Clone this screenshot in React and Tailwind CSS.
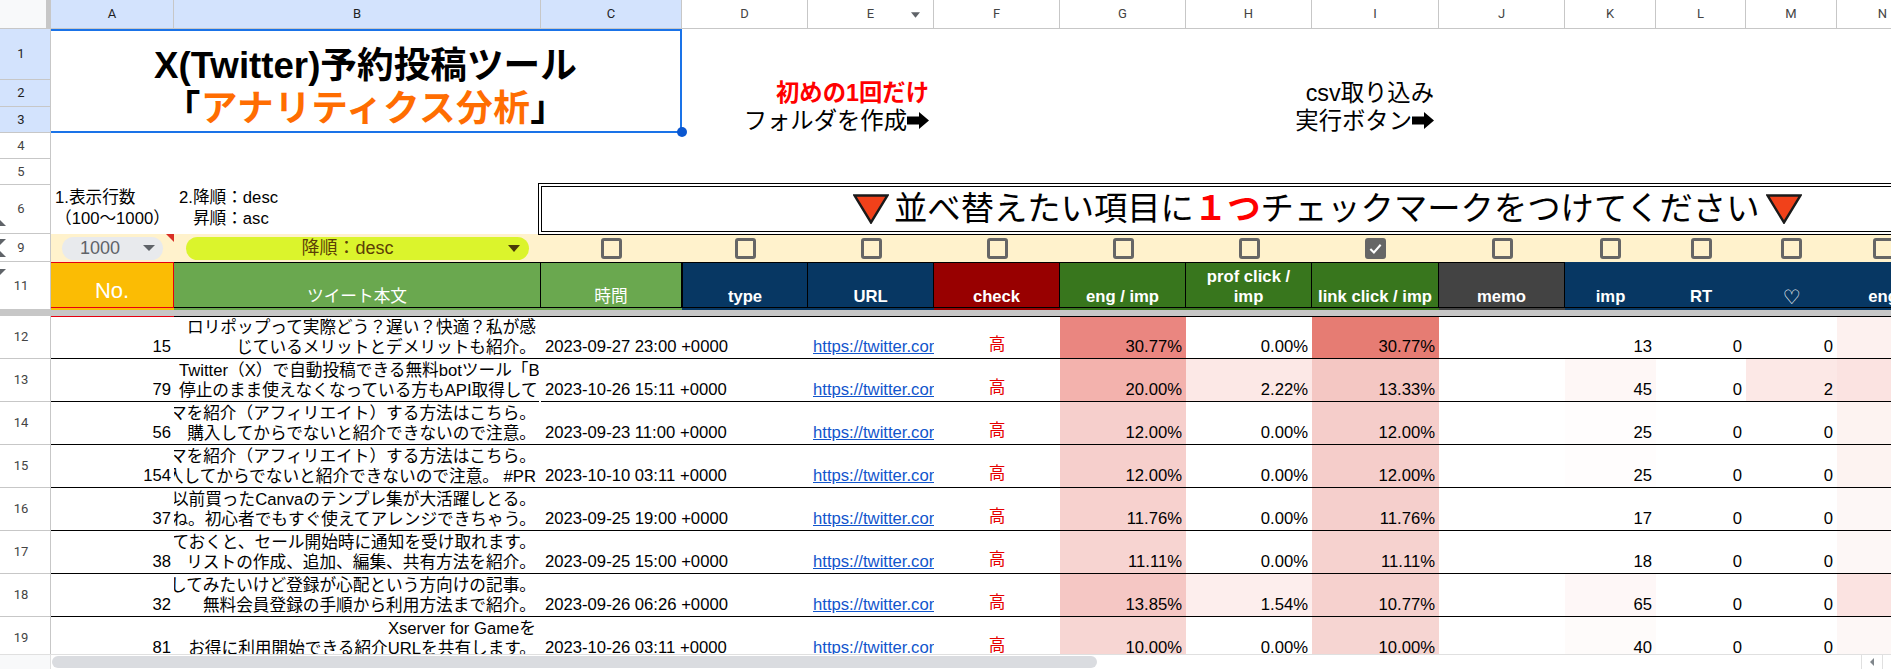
import { Fragment } from "react";

const cols = [
  ["A", true],
  ["B", true],
  ["C", true],
  ["D"],
  ["E"],
  ["F"],
  ["G"],
  ["H"],
  ["I"],
  ["J"],
  ["K"],
  ["L"],
  ["M"],
  ["N"],
];

const headers = [
  { label: "No.", bg: "bg-[#fbbc04]", cls: "font-normal text-[22px] leading-[26px] pb-[3px]", inner: "border-y border-r border-[#e6000f]" },
  { label: "ツイート本文", bg: "bg-[#6aa84f]", cls: "font-normal", inner: "border-y border-r border-black" },
  { label: "時間", bg: "bg-[#6aa84f]", cls: "font-normal", inner: "border-y border-r border-black" },
  { label: "type", bg: "bg-[#073763]", cls: "", inner: "border border-black" },
  { label: "URL", bg: "bg-[#073763]", cls: "", inner: "border-y border-r border-black" },
  { label: "check", bg: "bg-[#980000]", cls: "", inner: "border-y border-r border-black" },
  { label: "eng / imp", bg: "bg-[#38761d]", cls: "", inner: "border-y border-r border-black" },
  { label: "prof click / imp", bg: "bg-[#38761d]", cls: "", inner: "border-y border-r border-black" },
  { label: "link click / imp", bg: "bg-[#38761d]", cls: "", inner: "border-y border-r border-black" },
  { label: "memo", bg: "bg-[#434343]", cls: "", inner: "border-y border-r border-black" },
  { label: "imp", bg: "bg-[#073763]", cls: "", inner: "border-b border-black" },
  { label: "RT", bg: "bg-[#073763]", cls: "", inner: "border-b border-black" },
  { label: "♡", bg: "bg-[#073763]", cls: "font-normal", inner: "border-b border-black" },
  { label: "eng", bg: "bg-[#073763]", cls: "", inner: "border-b border-black" },
];

const rows = [
  { n: 12, no: 15, a: "ロリポップって実際どう？遅い？快適？私が感", b: "じているメリットとデメリットも紹介。", date: "2023-09-27 23:00 +0000", g: "30.77%", gc: "bg-[#ea8680]", h: "0.00%", hc: "bg-white", i: "30.77%", ic: "bg-[#e67c73]", k: 13, kc: "bg-white", m: 0, mc: "bg-white", nc: "bg-[#fdf1ef]" },
  { n: 13, no: 79, a: "Twitter（X）で自動投稿できる無料botツール「Botbird」", b: "停止のまま使えなくなっている方もAPI取得して", left: true, date: "2023-10-26 15:11 +0000", g: "20.00%", gc: "bg-[#f3b2ad]", h: "2.22%", hc: "bg-[#fce8e6]", i: "13.33%", ic: "bg-[#f4c7c3]", k: 45, kc: "bg-[#fef7f6]", m: 2, mc: "bg-[#fce8e6]", nc: "bg-[#fbe3e1]" },
  { n: 14, no: 56, a: "テーマを紹介（アフィリエイト）する方法はこちら。", b: "購入してからでないと紹介できないので注意。", date: "2023-09-23 11:00 +0000", g: "12.00%", gc: "bg-[#f6cfcc]", h: "0.00%", hc: "bg-white", i: "12.00%", ic: "bg-[#f5cdca]", k: 25, kc: "bg-[#fffdfd]", m: 0, mc: "bg-white", nc: "bg-[#fdf3f1]" },
  { n: 15, no: 154, a: "テーマを紹介（アフィリエイト）する方法はこちら。", b: "購入してからでないと紹介できないので注意。 #PR", date: "2023-10-10 03:11 +0000", g: "12.00%", gc: "bg-[#f6cfcc]", h: "0.00%", hc: "bg-white", i: "12.00%", ic: "bg-[#f5cdca]", k: 25, kc: "bg-[#fffdfd]", m: 0, mc: "bg-white", nc: "bg-[#fdf3f1]" },
  { n: 16, no: 37, a: "以前買ったCanvaのテンプレ集が大活躍しとる。", b: "ね。初心者でもすぐ使えてアレンジできちゃう。", date: "2023-09-25 19:00 +0000", g: "11.76%", gc: "bg-[#f7d1ce]", h: "0.00%", hc: "bg-white", i: "11.76%", ic: "bg-[#f5cfcc]", k: 17, kc: "bg-white", m: 0, mc: "bg-white", nc: "bg-[#fdf7f6]" },
  { n: 17, no: 38, a: "設定しておくと、セール開始時に通知を受け取れます。", b: "リストの作成、追加、編集、共有方法を紹介。", date: "2023-09-25 15:00 +0000", g: "11.11%", gc: "bg-[#f7d4d1]", h: "0.00%", hc: "bg-white", i: "11.11%", ic: "bg-[#f6d2cf]", k: 18, kc: "bg-white", m: 0, mc: "bg-white", nc: "bg-[#fdf7f6]" },
  { n: 18, no: 32, a: "してみたいけど登録が心配という方向けの記事。", b: "無料会員登録の手順から利用方法まで紹介。", date: "2023-09-26 06:26 +0000", g: "13.85%", gc: "bg-[#f5c7c4]", h: "1.54%", hc: "bg-[#fdeeed]", i: "10.77%", ic: "bg-[#f6d1ce]", k: 65, kc: "bg-[#fef7f7]", m: 0, mc: "bg-white", nc: "bg-[#fbe3e1]" },
  { n: 19, no: 81, a: "Xserver for Gameを", b: "お得に利用開始できる紹介URLを共有します。", date: "2023-10-26 03:11 +0000", g: "10.00%", gc: "bg-[#f7d6d3]", h: "0.00%", hc: "bg-white", i: "10.00%", ic: "bg-[#f6d5d2]", k: 40, kc: "bg-[#fefbfa]", m: 0, mc: "bg-white", nc: "bg-[#fdf7f6]" },
];

function RowLabel({ n, active }) {
  return (
    <div className={`flex items-center justify-center pr-[8px] border-b border-r border-[#c7c7c7] font-['Roboto',sans-serif] text-[13px] ${active ? "bg-[#d3e3fd] text-[#1f1f1f]" : "bg-white text-[#444]"}`}>
      {n}
    </div>
  );
}

function Arrow() {
  return (
    <svg viewBox="0 0 22 17" className="inline-block w-[22px] h-[17px]">
      <path d="M0 4.5h12V0l10 8.5L12 17v-4.500H0z" fill="#000" />
    </svg>
  );
}

function RedTriangle() {
  return (
    <svg viewBox="0 0 36 30" className="w-[36px] h-[30px] shrink-0">
      <path d="M1.5 1.5h33L18 28.500z" fill="#f1411a" stroke="#1a1a1a" strokeWidth="2.4" />
    </svg>
  );
}

function Check({ checked }) {
  return (
    <div className="flex items-center justify-center bg-[#fff2cc]">
      <div className={`flex items-center justify-center w-[21px] h-[21px] rounded-[3px] border-[3px] border-[#666] ${checked ? "bg-[#666]" : ""}`}>
        {checked && (
          <svg viewBox="0 0 16 16" className="w-[15px] h-[15px]">
            <path d="M2.5 8.500l3.800 3.800L13.500 4" fill="none" stroke="#fff" strokeWidth="2.200" />
          </svg>
        )}
      </div>
    </div>
  );
}

function Num({ children, cls = "bg-white" }) {
  return (
    <div className={`flex items-end justify-end pr-[4px] pb-[1px] border-b border-black whitespace-nowrap leading-[20px] ${cls}`}>
      {children}
    </div>
  );
}

function GroupMark({ up, cls }) {
  return (
    <svg viewBox="0 0 6 6" className={`absolute left-0 w-[6px] h-[6px] ${cls}`}>
      <path d={up ? "M-6 6L0 0l6 6z" : "M-6 0L0 6l6-6z"} fill="#5f6368" />
    </svg>
  );
}

export default function App() {
  return (
    <div className="relative w-[1891px] h-[669px] overflow-hidden bg-white text-black text-[16.67px] font-['Liberation_Sans','Noto_Sans_CJK_JP',sans-serif]">
      <div className="h-[654px] overflow-hidden">
        <div className="grid grid-cols-[51px_123px_367px_141px_126px_126px_126px_126px_126px_127px_126px_91px_90px_91px_92px] grid-rows-[29px_51px_27px_26px_26px_26px_49px_28px_48px_6px] auto-rows-[43px]">
          {/* column letters */}
          <div className="bg-[#f8f9fa] border-r-[5px] border-b border-[#c7c7c7]" />
          {cols.map(([c, on]) => (
            <div key={c} className={`relative flex items-center justify-center border-r border-b border-[#c7c7c7] font-['Roboto',sans-serif] text-[13px] ${on ? "bg-[#d3e3fd] text-[#1f1f1f]" : "bg-white text-[#444]"}`}>
              {c}
              {c === "E" && (
                <svg viewBox="0 0 10 6" className="absolute right-[13px] top-[12px] w-[9px] h-[6px]">
                  <path d="M0 0h10L5 6z" fill="#5f6368" />
                </svg>
              )}
            </div>
          ))}

          {/* rows 1-3 */}
          <RowLabel n={1} active />
          <div className="relative col-span-3 row-span-3 border-y-2 border-r-2 border-[#1a73e8] flex flex-col items-center pt-[13px] text-[36.67px] font-bold leading-[44px]">
            <div>X(Twitter)予約投稿ツール</div>
            <div className="-mt-[1px] tracking-[0.4px]">「<span className="text-[#ff6d01]">アナリティクス分析</span>」</div>
            <span className="absolute right-[-7px] bottom-[-6px] w-[10px] h-[10px] rounded-full bg-[#0b57d0]" />
          </div>
          <div className="col-span-11" />
          <RowLabel n={2} active />
          <div className="row-span-2 col-span-2 flex flex-col items-end justify-center pr-[5px] text-[23.33px] leading-[28px]">
            <div className="font-bold text-[#ff0000]">初めの1回だけ</div>
            <div className="flex items-center">フォルダを作成<Arrow /></div>
          </div>
          <div className="row-span-2 col-span-4 flex flex-col items-end justify-center pr-[5px] text-[23.33px] leading-[28px]">
            <div>csv取り込み</div>
            <div className="flex items-center">実行ボタン<Arrow /></div>
          </div>
          <div className="row-span-2 col-span-5" />
          <RowLabel n={3} active />

          <RowLabel n={4} />
          <div className="col-span-14" />
          <RowLabel n={5} />
          <div className="col-span-14" />

          {/* row 6 */}
          <RowLabel n={6} />
          <div className="flex flex-col justify-center pl-[4px] pb-[4px] leading-[21px] whitespace-nowrap">
            <div>1.表示行数</div>
            <div>（100〜1000）</div>
          </div>
          <div className="flex flex-col justify-center pl-[5px] pb-[4px] leading-[21px] whitespace-nowrap">
            <div>2.降順：desc</div>
            <div>&nbsp;&nbsp;&nbsp;昇順：asc</div>
          </div>
          <div className="col-span-12 -ml-[3px] -mt-[2px] -mb-[1px] border-[4px] border-double border-black flex items-center pl-[311px] text-[33.33px] leading-[40px] whitespace-nowrap z-10 bg-white">
            <RedTriangle />
            <span className="ml-[5px] mr-[6px]">並べ替えたい項目に<b className="text-[#ff0000]">１つ</b>チェックマークをつけてください</span>
            <RedTriangle />
          </div>

          {/* row 9 */}
          <RowLabel n={9} />
          <div className="relative flex items-center justify-center bg-[#fff2cc]">
            <div className="flex items-center justify-between w-[101px] h-[23px] pl-[18px] pr-[8px] rounded-full bg-[#e8eaed] text-[18px] text-[#5f6368]">
              1000
              <svg viewBox="0 0 12 6" className="w-[12px] h-[6px]"><path d="M0 0h12L6 6z" fill="#5f6368" /></svg>
            </div>
            <svg viewBox="0 0 8 8" className="absolute right-0 top-0 w-[8px] h-[8px]"><path d="M0 0h8v8z" fill="#d93025" /></svg>
          </div>
          <div className="flex items-center justify-center bg-[#fff2cc]">
            <div className="relative flex items-center justify-center w-[343px] h-[23px] pr-[20px] rounded-full bg-[#dbf42c] text-[18px] text-[#5b3f06]">
              降順：desc
              <svg viewBox="0 0 12 7" className="absolute right-[9px] top-[8px] w-[12px] h-[7px]"><path d="M0 0h12L6 7z" fill="#4a3a08" /></svg>
            </div>
          </div>
          {cols.slice(2).map(([c]) => (
            <Check key={c} checked={c === "I"} />
          ))}

          {/* row 11 */}
          <RowLabel n={11} />
          {headers.map((h) => (
            <div key={h.label} className={`flex flex-col min-w-0 pb-[2px] text-white font-bold ${h.bg}`}>
              <div className={`flex-1 flex items-end justify-center text-center leading-[20px] whitespace-nowrap ${h.cls} ${h.inner}`}>
                {h.label === "prof click / imp" ? (
                  <span>prof click /<br />imp</span>
                ) : h.label === "♡" ? (
                  <span className="text-[20px] font-['DejaVu_Sans',sans-serif]">{h.label}</span>
                ) : (
                  h.label
                )}
              </div>
            </div>
          ))}

          {/* freeze bar */}
          <div className="col-span-15 bg-[#c7c7c7]" />

          {/* data */}
          {rows.map((r, idx) => (
            <Fragment key={r.n}>
              <RowLabel n={r.n} />
              <Num cls={`bg-white !pr-[3px] ${idx === 0 ? "border-t border-t-[#e6000f]" : ""}`}>{r.no}</Num>
              <div className={`min-w-0 overflow-hidden flex flex-col justify-end border-b border-black leading-[20px] whitespace-nowrap ${r.left ? "items-start pl-[5px] mr-[2px]" : "items-end pr-[5px]"} ${idx === 0 ? "border-t" : ""}`}>
                <div>{r.a}</div>
                <div>{r.b}</div>
              </div>
              <Num cls={`!justify-start pl-[4px] ${idx === 0 ? "border-t" : ""}`}>{r.date}</Num>
              <div className={`border-b border-black ${idx === 0 ? "border-t" : ""}`} />
              <div className={`min-w-0 overflow-hidden flex items-end pl-[5px] pb-[1px] leading-[20px] border-b border-black whitespace-nowrap text-[#1155cc] underline ${idx === 0 ? "border-t" : ""}`}>
                https://twitter.com/
              </div>
              <div className={`flex items-end justify-center pb-[3px] leading-[20px] border-b border-black text-[#e60000] ${idx === 0 ? "border-t" : ""}`}>高</div>
              <Num cls={`${r.gc} ${idx === 0 ? "border-t" : ""}`}>{r.g}</Num>
              <Num cls={`${r.hc} ${idx === 0 ? "border-t" : ""}`}>{r.h}</Num>
              <Num cls={`${r.ic} ${idx === 0 ? "border-t" : ""}`}>{r.i}</Num>
              <div className={`border-b border-black ${idx === 0 ? "border-t" : ""}`} />
              <Num cls={`${r.kc} ${idx === 0 ? "border-t" : ""}`}>{r.k}</Num>
              <Num cls={`bg-white ${idx === 0 ? "border-t" : ""}`}>0</Num>
              <Num cls={`${r.mc} ${idx === 0 ? "border-t" : ""}`}>{r.m}</Num>
              <div className={`border-b border-black ${r.nc} ${idx === 0 ? "border-t" : ""}`} />
            </Fragment>
          ))}
        </div>
      </div>

      {/* outline group toggles */}
      <GroupMark up cls="top-[220px]" />
      <GroupMark cls="top-[239px]" />
      <GroupMark up cls="top-[251px]" />
      <GroupMark cls="top-[269px]" />

      {/* horizontal scrollbar */}
      <div className="flex h-[15px] border-t border-[#e0e0e0] bg-white">
        <div className="w-[51px] bg-[#f8f9fa] border-r border-[#e0e0e0]" />
        <div className="ml-[1px] mt-[1px] w-[1045px] h-[12px] rounded-full bg-[#dadce0]" />
        <div className="ml-auto w-[21px] flex items-center justify-center border-l border-[#e0e0e0]">
          <svg viewBox="0 0 4 8" className="w-[4px] h-[8px]"><path d="M4 0v8L0 4z" fill="#80868b" /></svg>
        </div>
        <div className="w-[9px] border-l border-[#e0e0e0]" />
      </div>
    </div>
  );
}
